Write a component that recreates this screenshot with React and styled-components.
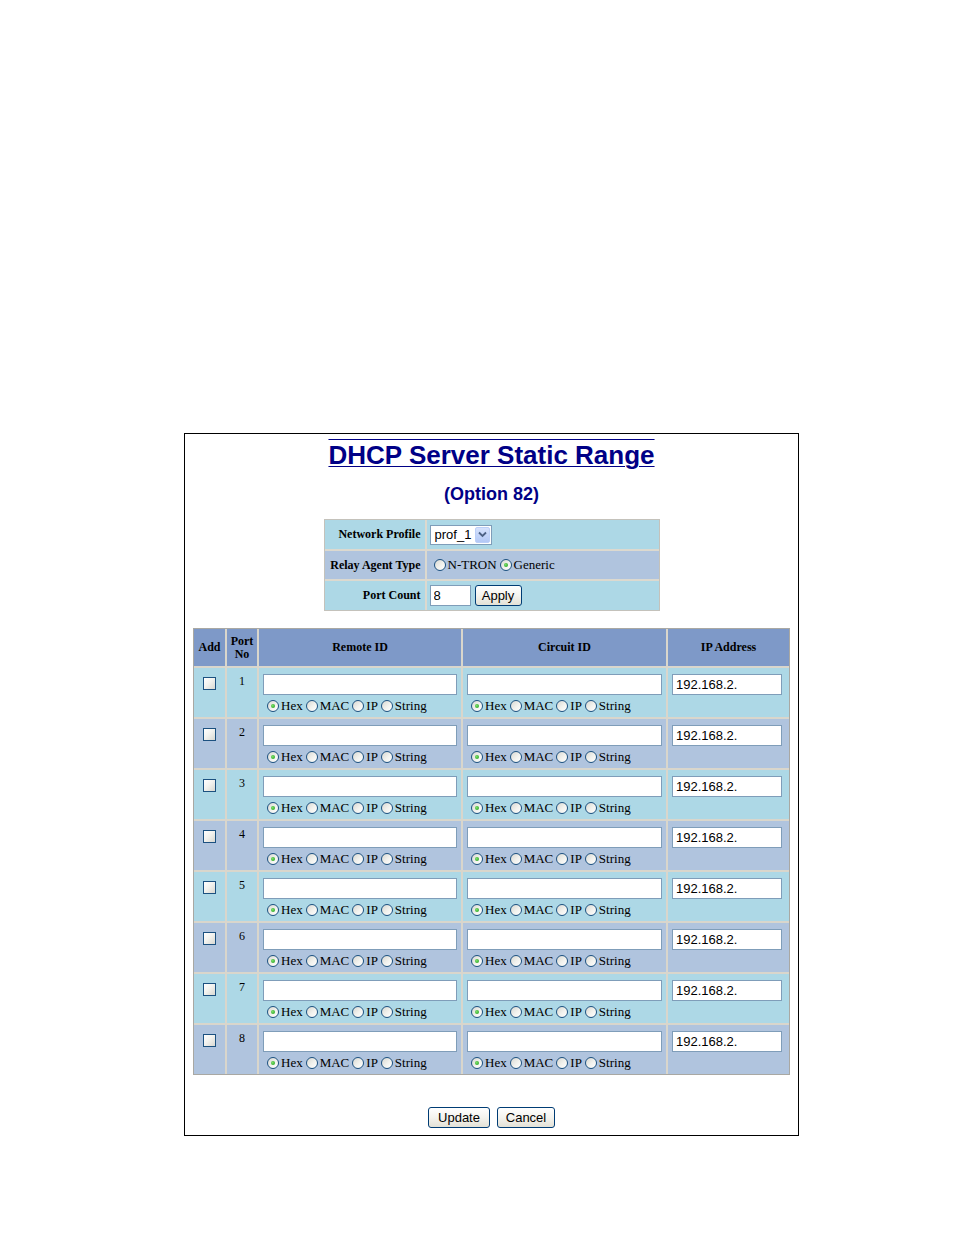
import styled, { createGlobalStyle } from "styled-components";

const GlobalStyle = createGlobalStyle`
  html, body {
    margin: 0;
    padding: 0;
    background: #fff;
  }
  body {
    font-family: "Liberation Serif", "Times New Roman", serif;
  }
`;

const Page = styled.div`
  padding: 433px 0 100px 184px;
`;

const Frame = styled.div`
  width: 613px;
  border: 1px solid #000;
  display: flex;
  flex-direction: column;
  align-items: center;
  padding: 7px 0 7px;
`;

const Title = styled.h1`
  margin: 0;
  font-family: "Liberation Sans", Arial, sans-serif;
  font-size: 26px;
  line-height: 29px;
  font-weight: bold;
  color: #000086;
  text-decoration: underline overline;
  text-decoration-thickness: 1px;
  text-underline-offset: 2px;
`;

const Subtitle = styled.h2`
  margin: 14px 0 0;
  font-family: "Liberation Sans", Arial, sans-serif;
  font-size: 18px;
  line-height: 20px;
  font-weight: bold;
  color: #000086;
`;

const FormGrid = styled.div`
  margin-top: 15px;
  width: 334px;
  display: grid;
  grid-template-columns: 100px 1fr;
  gap: 2px;
  background: #dcd9cf;
  border: 1px solid #c4c2bb;
`;

const FormLabel = styled.div`
  background: ${(p) => p.$bg};
  height: ${(p) => p.$h}px;
  display: flex;
  align-items: center;
  justify-content: flex-end;
  padding-right: 4px;
  font-weight: bold;
  font-size: 12px;
  color: #000;
`;

const FormValue = styled.div`
  background: ${(p) => p.$bg};
  height: ${(p) => p.$h}px;
  display: flex;
  align-items: center;
  gap: 4px;
  padding-left: 3px;
  font-size: 13px;
`;

const Select = styled.div`
  width: 56px;
  height: 18px;
  border: 1px solid #7f9db9;
  background: #fff;
  display: flex;
  align-items: center;
  justify-content: space-between;
  padding-left: 4px;
  font-family: "Liberation Sans", Arial, sans-serif;
  font-size: 13px;
`;

const SelectButton = styled.span`
  width: 15px;
  height: 16px;
  margin-right: 1px;
  border-radius: 2px;
  background: linear-gradient(180deg, #d6e2fd, #b3c8f6);
  border: 1px solid #bccff8;
  box-sizing: border-box;
  display: flex;
  align-items: center;
  justify-content: center;
`;

const TextBox = styled.input`
  box-sizing: border-box;
  width: ${(p) => p.$w || "100%"};
  height: 21px;
  margin: 0;
  border: 1px solid #7f9db9;
  background: #fff;
  padding: 0 3px;
  font-family: "Liberation Sans", Arial, sans-serif;
  font-size: 13px;
  color: #000;
  outline: none;
`;

const Button = styled.button`
  height: 21px;
  width: ${(p) => p.$w}px;
  padding: 0;
  border: 1px solid #003c74;
  border-radius: 3px;
  background: linear-gradient(180deg, #fff 0%, #f4f3ee 50%, #e3e1d6 100%);
  font-family: "Liberation Sans", Arial, sans-serif;
  font-size: 13px;
  color: #000;
`;

const RadioGroup = styled.div`
  display: flex;
  align-items: center;
  margin-top: ${(p) => p.$mt || 0}px;
  padding-left: ${(p) => p.$pl || 0}px;
  font-size: 13px;
  color: #000;
  white-space: nowrap;
`;

const RadioItem = styled.label`
  display: flex;
  align-items: center;
  gap: 2px;
  margin-right: 3px;
  line-height: 14px;
`;

const Radio = styled.input.attrs({ type: "radio" })`
  appearance: none;
  margin: 0;
  width: 12px;
  height: 12px;
  border-radius: 50%;
  border: 1px solid #1c5180;
  background: linear-gradient(135deg, #d8d8d2 0%, #f2f2ee 55%, #fff 100%);
  box-sizing: border-box;
  position: relative;
  flex: none;

  &:checked::after {
    content: "";
    position: absolute;
    left: 3px;
    top: 3px;
    width: 4px;
    height: 4px;
    border-radius: 50%;
    background: radial-gradient(circle at 40% 40%, #7ee06a, #169a16);
  }
`;

const Checkbox = styled.input.attrs({ type: "checkbox" })`
  appearance: none;
  margin: 0;
  width: 13px;
  height: 13px;
  border: 1px solid #1c5180;
  background: linear-gradient(135deg, #fff 0%, #f3f3ef 45%, #d8d8d1 100%);
  box-sizing: border-box;
`;

const PortTable = styled.div`
  margin-top: 17px;
  width: 595px;
  display: grid;
  grid-template-columns: 31px 30px 202px 203px 121px;
  gap: 2px;
  background: #d9d6cc;
  border: 1px solid #a9a8a3;
`;

const HeadCell = styled.div`
  height: 37px;
  background: #7e99c8;
  display: flex;
  align-items: center;
  justify-content: center;
  text-align: center;
  font-weight: bold;
  font-size: 12px;
  line-height: 13px;
  color: #000;
`;

const Cell = styled.div`
  height: 49px;
  box-sizing: border-box;
  background: ${(p) => (p.$odd ? "#add8e6" : "#b0c4de")};
  display: flex;
  flex-direction: column;
  align-items: ${(p) => p.$align || "stretch"};
  padding: ${(p) => p.$pad || "6px 4px 0"};
  font-size: 12px;
  color: #000;
`;

const Actions = styled.div`
  margin-top: 32px;
  display: flex;
  gap: 7px;
`;

const formats = ["Hex", "MAC", "IP", "String"];

const FormatRadios = ({ name }) => (
  <RadioGroup $mt={4} $pl={4}>
    {formats.map((f, i) => (
      <RadioItem key={f}>
        <Radio name={name} defaultChecked={i === 0} />
        {f}
      </RadioItem>
    ))}
  </RadioGroup>
);

const ports = [1, 2, 3, 4, 5, 6, 7, 8];

const App = () => {
  return (
    <Page>
      <GlobalStyle />
      <Frame>
        <Title>DHCP Server Static Range</Title>
        <Subtitle>(Option 82)</Subtitle>

        <FormGrid>
          <FormLabel $bg="#add8e6" $h={29}>Network Profile</FormLabel>
          <FormValue $bg="#add8e6" $h={29}>
            <Select>
              prof_1
              <SelectButton>
                <svg width="9" height="7" viewBox="0 0 9 7">
                  <path d="M1 1.5 L4.5 5 L8 1.5" fill="none" stroke="#4d6185" strokeWidth="1.8" />
                </svg>
              </SelectButton>
            </Select>
          </FormValue>

          <FormLabel $bg="#b0c4de" $h={28}>Relay Agent Type</FormLabel>
          <FormValue $bg="#b0c4de" $h={28}>
            <RadioGroup $pl={4}>
              <RadioItem>
                <Radio name="relay" />
                N-TRON
              </RadioItem>
              <RadioItem>
                <Radio name="relay" defaultChecked />
                Generic
              </RadioItem>
            </RadioGroup>
          </FormValue>

          <FormLabel $bg="#add8e6" $h={29}>Port Count</FormLabel>
          <FormValue $bg="#add8e6" $h={29}>
            <TextBox $w="41px" defaultValue="8" />
            <Button $w={47}>Apply</Button>
          </FormValue>
        </FormGrid>

        <PortTable>
          <HeadCell>Add</HeadCell>
          <HeadCell>
            Port
            <br />
            No
          </HeadCell>
          <HeadCell>Remote ID</HeadCell>
          <HeadCell>Circuit ID</HeadCell>
          <HeadCell>IP Address</HeadCell>

          {ports.map((n) => {
            const odd = n % 2 === 1;
            return [
              <Cell key={`a${n}`} $odd={odd} $align="center" $pad="9px 0 0">
                <Checkbox />
              </Cell>,
              <Cell key={`p${n}`} $odd={odd} $align="center" $pad="6px 0 0">
                {n}
              </Cell>,
              <Cell key={`r${n}`} $odd={odd}>
                <TextBox />
                <FormatRadios name={`remote${n}`} />
              </Cell>,
              <Cell key={`c${n}`} $odd={odd}>
                <TextBox />
                <FormatRadios name={`circuit${n}`} />
              </Cell>,
              <Cell key={`i${n}`} $odd={odd}>
                <TextBox $w="110px" defaultValue="192.168.2." />
              </Cell>,
            ];
          })}
        </PortTable>

        <Actions>
          <Button $w={62}>Update</Button>
          <Button $w={58}>Cancel</Button>
        </Actions>
      </Frame>
    </Page>
  );
};

export default App;
